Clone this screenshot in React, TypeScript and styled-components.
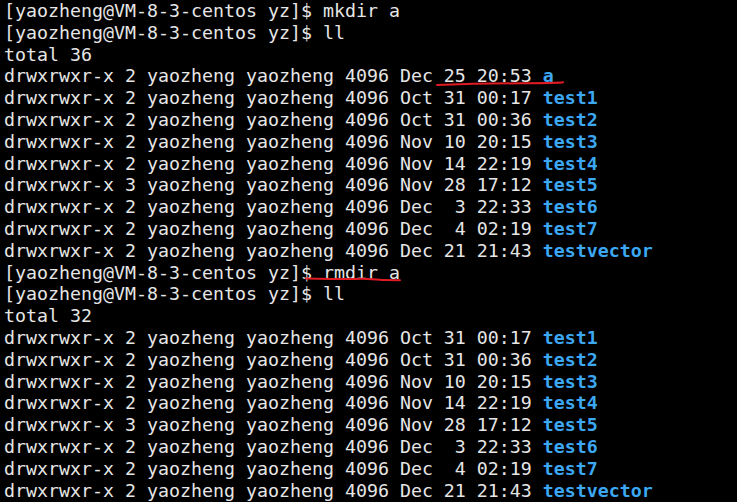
import React from "react";
import styled, { createGlobalStyle } from "styled-components";

const Global = createGlobalStyle`
  html, body { margin: 0; padding: 0; background: #000; }
  body { width: 737px; height: 502px; overflow: hidden; }
`;

const Screen = styled.div`
  position: relative;
  width: 737px;
  height: 502px;
  background: #000000;
  padding: 0 0 0 4px;
  box-sizing: border-box;
  font-family: "DejaVu Sans Mono", monospace;
  font-size: 18.27px;
  line-height: 21.8px;
  color: #e6e6e6;
  white-space: pre;
`;

const Line = styled.div`
  height: 21.8px;
`;

const Dir = styled.span`
  color: #3ca7f2;
  font-weight: bold;
`;

const Mark = styled.svg`
  position: absolute;
  left: 0;
  top: 0;
  pointer-events: none;
`;

type Entry = { links: number; mon: string; day: string; time: string; name: string };

const listing1: Entry[] = [
  { links: 2, mon: "Dec", day: "25", time: "20:53", name: "a" },
  { links: 2, mon: "Oct", day: "31", time: "00:17", name: "test1" },
  { links: 2, mon: "Oct", day: "31", time: "00:36", name: "test2" },
  { links: 2, mon: "Nov", day: "10", time: "20:15", name: "test3" },
  { links: 2, mon: "Nov", day: "14", time: "22:19", name: "test4" },
  { links: 3, mon: "Nov", day: "28", time: "17:12", name: "test5" },
  { links: 2, mon: "Dec", day: " 3", time: "22:33", name: "test6" },
  { links: 2, mon: "Dec", day: " 4", time: "02:19", name: "test7" },
  { links: 2, mon: "Dec", day: "21", time: "21:43", name: "testvector" },
];

const listing2 = listing1.slice(1);

const prompt = "[yaozheng@VM-8-3-centos yz]$ ";

const Row: React.FC<{ e: Entry }> = ({ e }) => (
  <Line>
    {`drwxrwxr-x ${e.links} yaozheng yaozheng 4096 ${e.mon} ${e.day} ${e.time} `}
    <Dir>{e.name}</Dir>
  </Line>
);

export default function App() {
  return (
    <>
      <Global />
      <Screen>
        <Line>{prompt + "mkdir a"}</Line>
        <Line>{prompt + "ll"}</Line>
        <Line>total 36</Line>
        {listing1.map((e) => (
          <Row key={"a" + e.name} e={e} />
        ))}
        <Line>{prompt + "rmdir a"}</Line>
        <Line>{prompt + "ll"}</Line>
        <Line>total 32</Line>
        {listing2.map((e) => (
          <Row key={"b" + e.name} e={e} />
        ))}
        <Mark width="737" height="502" viewBox="0 0 737 502">
          <path
            d="M437 85 Q 480 83.5 520 83.3 T 563 82.3"
            stroke="#e01b24"
            strokeWidth="2"
            fill="none"
            strokeLinecap="round"
          />
          <path
            d="M306 278.5 Q 330 279 355 279 Q 365 278.5 372 279.3 T 400 280.3"
            stroke="#e01b24"
            strokeWidth="2"
            fill="none"
            strokeLinecap="round"
          />
        </Mark>
      </Screen>
    </>
  );
}
